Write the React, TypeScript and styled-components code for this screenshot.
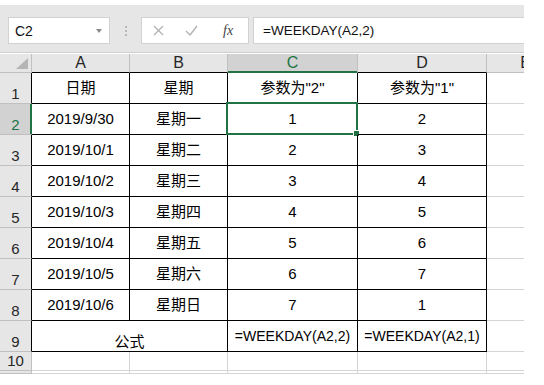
import React from 'react';
import styled, { createGlobalStyle, css } from 'styled-components';

const GREEN = '#217346';
const GRID = '#d4d4d4';
const HEAD_LINE = '#c0c0c0';

const GlobalStyle = createGlobalStyle`
  body {
    margin: 0;
    background: #ffffff;
    font-family: "Liberation Sans", "Noto Sans CJK SC", sans-serif;
  }
`;

const Shell = styled.div`
  width: 544px;
  height: 385px;
  overflow: hidden;
  background: #ffffff;
`;

// Formula bar
const FormulaBar = styled.div`
  margin-top: 5px;
  width: 524px;
  height: 48px;
  box-sizing: border-box;
  padding: 12px 0 0 8px;
  background: #e6e6e6;
  border-bottom: 1px solid #cdcdcd;
  display: flex;
  align-items: flex-start;
`;

const NameBox = styled.div`
  width: 102px;
  height: 27px;
  box-sizing: border-box;
  background: #ffffff;
  border: 1px solid #d2d2d2;
  display: flex;
  align-items: center;
  justify-content: space-between;
  padding: 0 7px 0 6px;
  font-size: 14px;
  color: #111;
`;

const DropArrow = styled.span`
  width: 0;
  height: 0;
  border-left: 3px solid transparent;
  border-right: 3px solid transparent;
  border-top: 4px solid #8a8a8a;
`;

const Grip = styled.div`
  width: 31px;
  height: 27px;
  display: flex;
  flex-direction: column;
  align-items: center;
  justify-content: center;
  gap: 2px;
`;

const GripDot = styled.span`
  width: 2px;
  height: 2px;
  background: #b8b8b8;
`;

const ButtonBox = styled.div`
  width: 108px;
  height: 27px;
  box-sizing: border-box;
  background: #ffffff;
  border: 1px solid #d2d2d2;
  display: flex;
  align-items: center;
  padding-left: 11px;
  gap: 21px;
`;

const FxLabel = styled.span`
  font-family: "Liberation Serif", serif;
  font-style: italic;
  font-size: 14px;
  color: #444;
  margin-left: 4px;
`;

const FormulaInput = styled.div`
  margin-left: 4px;
  flex: 1;
  height: 27px;
  box-sizing: border-box;
  background: #ffffff;
  border: 1px solid #d2d2d2;
  border-right: none;
  display: flex;
  align-items: center;
  padding-left: 9px;
  font-size: 13.5px;
  color: #111;
`;

// Sheet grid (clipped on the right like the window edge)
const Sheet = styled.div`
  margin-top: 1px;
  width: 524px;
  overflow: hidden;
  display: grid;
  grid-template-columns: 32px 98px 98px 130px 129px 78px;
  grid-template-rows: 19px repeat(9, 31px) 19px 3px;
`;

const Corner = styled.div`
  background: #e6e6e6;
  border-right: 1px solid ${HEAD_LINE};
  border-bottom: 1px solid ${HEAD_LINE};
  display: flex;
  align-items: flex-end;
  justify-content: flex-end;
  padding: 0 3px 3px 0;
`;

const CornerMark = styled.span`
  width: 0;
  height: 0;
  border-left: 12px solid transparent;
  border-bottom: 11px solid #b5b5b5;
`;

const ColHead = styled.div<{ $selected?: boolean; $line: string }>`
  background: ${(p) => (p.$selected ? '#d2d2d2' : '#e6e6e6')};
  border-right: 1px solid ${HEAD_LINE};
  border-bottom: 1px solid ${(p) => p.$line};
  color: ${(p) => (p.$selected ? GREEN : '#262626')};
  font-size: 16px;
  line-height: 18px;
  text-align: center;
  ${(p) =>
    p.$selected &&
    css`
      box-shadow: inset 0 -1px 0 ${GREEN};
    `}
`;

const RowHead = styled.div<{ $selected?: boolean; $line: string }>`
  background: ${(p) => (p.$selected ? '#d2d2d2' : '#e6e6e6')};
  border-right: 1px solid ${(p) => p.$line};
  border-bottom: 1px solid ${HEAD_LINE};
  color: ${(p) => (p.$selected ? GREEN : '#262626')};
  font-size: 15px;
  line-height: 15px;
  display: flex;
  align-items: flex-end;
  justify-content: center;
  padding-bottom: 2px;
  box-sizing: border-box;
  overflow: hidden;
  ${(p) =>
    p.$selected &&
    css`
      box-shadow: inset -1px 0 0 ${GREEN};
    `}
`;

const Cell = styled.div<{ $grid?: boolean; $span?: number; $bottom?: boolean; $small?: boolean }>`
  position: relative;
  border-right: 1px solid ${(p) => (p.$grid ? GRID : '#000')};
  border-bottom: 1px solid ${(p) => (p.$grid ? GRID : '#000')};
  grid-column: ${(p) => (p.$span ? `span ${p.$span}` : 'auto')};
  display: flex;
  align-items: ${(p) => (p.$bottom ? 'flex-end' : 'center')};
  justify-content: center;
  font-size: ${(p) => (p.$small ? '14px' : '15px')};
  line-height: 18px;
  color: #000;
  white-space: nowrap;
`;

const Selection = styled.div`
  position: absolute;
  top: -2px;
  left: -2px;
  right: -1px;
  bottom: -1px;
  border: 2px solid ${GREEN};
  pointer-events: none;
`;

const FillHandle = styled.span`
  position: absolute;
  right: -4px;
  bottom: -4px;
  width: 5px;
  height: 5px;
  background: ${GREEN};
  border: 1px solid #ffffff;
`;

const rows = [
  ['2019/9/30', '星期一', '1', '2'],
  ['2019/10/1', '星期二', '2', '3'],
  ['2019/10/2', '星期三', '3', '4'],
  ['2019/10/3', '星期四', '4', '5'],
  ['2019/10/4', '星期五', '5', '6'],
  ['2019/10/5', '星期六', '6', '7'],
  ['2019/10/6', '星期日', '7', '1'],
];

const cols = ['A', 'B', 'C', 'D', 'E'];

export default function App() {
  return (
    <Shell>
      <GlobalStyle />
      <FormulaBar>
        <NameBox>
          C2
          <DropArrow />
        </NameBox>
        <Grip>
          <GripDot />
          <GripDot />
          <GripDot />
        </Grip>
        <ButtonBox>
          <svg width="11" height="11" viewBox="0 0 11 11">
            <path d="M1 1 L10 10 M10 1 L1 10" stroke="#b0b0b0" strokeWidth="1.2" fill="none" />
          </svg>
          <svg width="13" height="11" viewBox="0 0 13 11">
            <path d="M1 6 L5 10 L12 1" stroke="#b0b0b0" strokeWidth="1.3" fill="none" />
          </svg>
          <FxLabel>fx</FxLabel>
        </ButtonBox>
        <FormulaInput>=WEEKDAY(A2,2)</FormulaInput>
      </FormulaBar>

      <Sheet>
        <Corner>
          <CornerMark />
        </Corner>
        {cols.map((c) => (
          <ColHead key={c} $selected={c === 'C'} $line={c === 'E' ? HEAD_LINE : c === 'C' ? GREEN : '#000'}>
            {c}
          </ColHead>
        ))}

        <RowHead $line="#000">1</RowHead>
        <Cell>日期</Cell>
        <Cell>星期</Cell>
        <Cell>参数为"2"</Cell>
        <Cell>参数为"1"</Cell>
        <Cell $grid />

        {rows.map((r, i) => (
          <React.Fragment key={r[0]}>
            <RowHead $selected={i === 0} $line={i === 0 ? GREEN : '#000'}>
              {i + 2}
            </RowHead>
            <Cell>{r[0]}</Cell>
            <Cell>{r[1]}</Cell>
            <Cell>
              {r[2]}
              {i === 0 && (
                <Selection>
                  <FillHandle />
                </Selection>
              )}
            </Cell>
            <Cell>{r[3]}</Cell>
            <Cell $grid />
          </React.Fragment>
        ))}

        <RowHead $line="#000">9</RowHead>
        <Cell $span={2} $bottom>
          公式
        </Cell>
        <Cell $small>=WEEKDAY(A2,2)</Cell>
        <Cell $small>=WEEKDAY(A2,1)</Cell>
        <Cell $grid />

        <RowHead $line={HEAD_LINE}>10</RowHead>
        <Cell $grid />
        <Cell $grid />
        <Cell $grid />
        <Cell $grid />
        <Cell $grid />

        <RowHead $line={HEAD_LINE} />
        <Cell $grid />
        <Cell $grid />
        <Cell $grid />
        <Cell $grid />
        <Cell $grid />
      </Sheet>
    </Shell>
  );
}
